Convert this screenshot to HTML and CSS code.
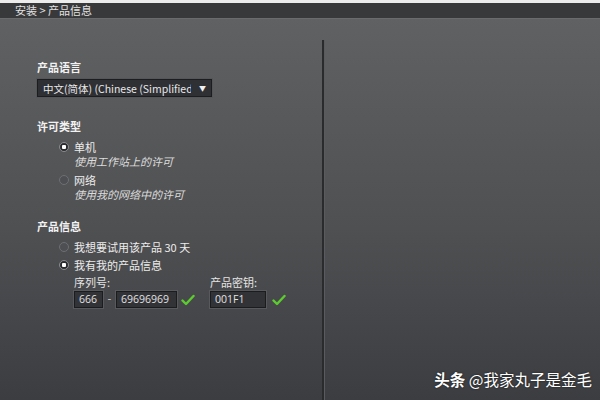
FILE: index.html
```html
<!DOCTYPE html>
<html lang="zh-CN">
<head>
    <meta charset="UTF-8">
    <title>安装 &gt; 产品信息</title>
    <link rel="stylesheet" href="styles.css">
</head>
<body>
    <div class="topline"></div>
    <div class="crumbs">安装 &gt; 产品信息</div>

    <div class="main">
        <div class="left">
            <div class="heading first">产品语言</div>
            <div class="select">
                <span class="select-text">中文(简体) (Chinese (Simplified)</span>
                <span class="arrow">&#9660;</span>
            </div>

            <div class="heading section">许可类型</div>
            <div class="option">
                <span class="radio checked"></span>
                <div>
                    <div class="opt-label">单机</div>
                    <div class="opt-desc">使用工作站上的许可</div>
                </div>
            </div>
            <div class="option spaced">
                <span class="radio"></span>
                <div>
                    <div class="opt-label">网络</div>
                    <div class="opt-desc">使用我的网络中的许可</div>
                </div>
            </div>

            <div class="heading section2">产品信息</div>
            <div class="option">
                <span class="radio"></span>
                <div class="opt-label">我想要试用该产品 30 天</div>
            </div>
            <div class="option next">
                <span class="radio checked"></span>
                <div class="opt-label">我有我的产品信息</div>
            </div>

            <div class="keys">
                <div class="serial-col">
                    <div class="field-label">序列号:</div>
                    <div class="field-row">
                        <div class="field short">666</div>
                        <span class="dash">-</span>
                        <div class="field long">69696969</div>
                        <svg class="check" width="14" height="12" viewBox="0 0 14 12">
                            <path d="M1.5 6.5 L5 10 L12.5 2" fill="none" stroke="#5ccc2e" stroke-width="2.4" stroke-linecap="round" stroke-linejoin="round"/>
                        </svg>
                    </div>
                </div>
                <div class="key-col">
                    <div class="field-label">产品密钥:</div>
                    <div class="field-row">
                        <div class="field key">001F1</div>
                        <svg class="check wide" width="14" height="12" viewBox="0 0 14 12">
                            <path d="M1.5 6.5 L5 10 L12.5 2" fill="none" stroke="#5ccc2e" stroke-width="2.4" stroke-linecap="round" stroke-linejoin="round"/>
                        </svg>
                    </div>
                </div>
            </div>
        </div>
        <div class="divider"></div>
        <div class="right"></div>

        <div class="watermark"><b>头条</b> @我家丸子是金毛</div>
    </div>
</body>
</html>
```

FILE: styles.css
```css
body {
    margin: 0;
    width: 600px;
    height: 400px;
    overflow: hidden;
    font-family: "Noto Sans CJK SC", "Noto Sans", sans-serif;
    font-size: 11px;
    color: #e6e6e6;
    background-color: #3d3e42;
}
.topline {
    height: 3px;
    background-color: #ececec;
}
.crumbs {
    height: 15px;
    line-height: 15px;
    padding-left: 15px;
    background-color: #38393b;
    color: #e2e2e2;
    border-bottom: 1px solid #6a6b6d;
}
.main {
    position: relative;
    display: flex;
    height: 381px;
    background: linear-gradient(#606162, #4f5052 55%, #3c3d41);
}
.left {
    width: 322px;
    padding-left: 37px;
    box-sizing: border-box;
}
.divider {
    width: 2px;
    margin-top: 21px;
    background-color: #2a2b2d;
    border-right: 1px solid #5a5b5e;
}
.right {
    flex: 1;
}
.heading {
    font-weight: bold;
    color: #f2f2f2;
    line-height: 12px;
}
.heading.first {
    margin-top: 42px;
}
.heading.section {
    margin-top: 23px;
}
.heading.section2 {
    margin-top: 19px;
}
.select {
    display: flex;
    align-items: center;
    width: 175px;
    height: 18px;
    margin-top: 6px;
    box-sizing: border-box;
    padding: 0 5px 0 5px;
    background-color: #2f3034;
    border: 1px solid #1c1d1f;
    box-shadow: 0 0 0 1px #55565a;
    color: #e8e8e8;
}
.select-text {
    width: 148px;
    font-size: 10.5px;
    white-space: nowrap;
    overflow: hidden;
}
.arrow {
    margin-left: auto;
    font-size: 7px;
    color: #f0f0f0;
}
.option {
    display: flex;
    align-items: flex-start;
    margin-left: 22px;
    margin-top: 8px;
    line-height: 14px;
}
.option.spaced {
    margin-top: 5px;
}
.option.next {
    margin-top: 4px;
}
.radio {
    width: 8px;
    height: 8px;
    margin-top: 2px;
    margin-right: 5px;
    border-radius: 50%;
    border: 1px solid #6e6f72;
    background-color: #4e4f52;
    flex-shrink: 0;
}
.radio.checked {
    background: radial-gradient(circle, #ffffff 0 2px, #2a2b2e 2.5px);
    border-color: #8a8b8e;
}
.opt-label {
    color: #ececec;
}
.opt-desc {
    font-style: italic;
    color: #dcdcdc;
}
.keys {
    display: flex;
    margin-left: 37px;
    margin-top: 3px;
}
.serial-col {
    width: 136px;
}
.field-label {
    line-height: 14px;
    color: #e4e4e4;
}
.field-row {
    display: flex;
    align-items: center;
    margin-top: 2px;
}
.field {
    height: 17px;
    line-height: 15px;
    box-sizing: border-box;
    padding-left: 4px;
    background-color: #323337;
    border: 1px solid #1b1c1e;
    box-shadow: 0 0 0 1px #58595c;
    font-family: "Open Sans", "Noto Sans", sans-serif;
    font-size: 10.5px;
    color: #e2e2e2;
}
.field.short {
    width: 29px;
}
.field.long {
    width: 61px;
}
.field.key {
    width: 56px;
}
.dash {
    width: 13px;
    text-align: center;
    color: #d0d0d0;
    margin-top: -4px;
}
.check {
    margin-left: 4px;
}
.check.wide {
    margin-left: 6px;
}
.watermark {
    position: absolute;
    right: 8px;
    bottom: 10px;
    font-size: 15.5px;
    color: #ffffff;
    text-shadow: 0 0 2px rgba(0,0,0,0.7);
}
```
